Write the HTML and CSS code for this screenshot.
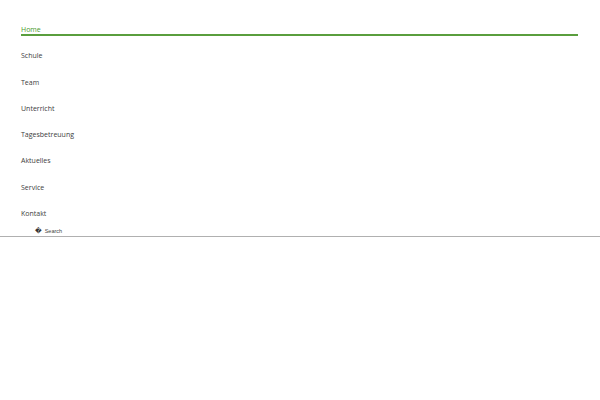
FILE: index.html
```html
<!DOCTYPE html>
<html lang="de">
<head>
  <meta charset="UTF-8" />
  <title>Schule</title>
  <link rel="stylesheet" href="styles.css">
</head>
<body>
  <nav class="main-nav">
    <ul class="menu">
      <li><a href="#" class="active">Home</a></li>
      <li><a href="#">Schule</a></li>
      <li><a href="#">Team</a></li>
      <li><a href="#">Unterricht</a></li>
      <li><a href="#">Tagesbetreuung</a></li>
      <li><a href="#">Aktuelles</a></li>
      <li><a href="#">Service</a></li>
      <li><a href="#">Kontakt</a></li>
    </ul>
  </nav>
  <form class="search">
    <span class="search-icon">&#xFFFD;</span>
    <span class="search-label">Search</span>
  </form>
</body>
</html>
```

FILE: styles.css
```css
body {
  margin: 0;
  background: #fff;
  font-family: "Open Sans", sans-serif;
}
.main-nav {
  padding: 25px 22px 0 21px;
}
.menu {
  list-style: none;
  margin: 0;
  padding: 0;
}
.menu a {
  display: block;
  font-size: 7px;
  font-weight: 400;
  line-height: 9px;
  color: #3c3c3c;
  text-decoration: none;
  border-bottom: 2px solid transparent;
  margin-bottom: 15.3px;
}
.menu a.active {
  color: #4a9a2c;
  border-bottom-color: #5a9e3e;
}
.search {
  display: flex;
  align-items: center;
  gap: 3px;
  padding: 0 0 1px 35px;
  margin-top: -7px;
  border-bottom: 1px solid #b0b0b0;
  font-family: "Liberation Sans", sans-serif;
  font-size: 5.5px;
  line-height: 7px;
  color: #444;
}
.search-icon {
  font-family: "DejaVu Sans", sans-serif;
  font-size: 6.5px;
  color: #333;
}
```
